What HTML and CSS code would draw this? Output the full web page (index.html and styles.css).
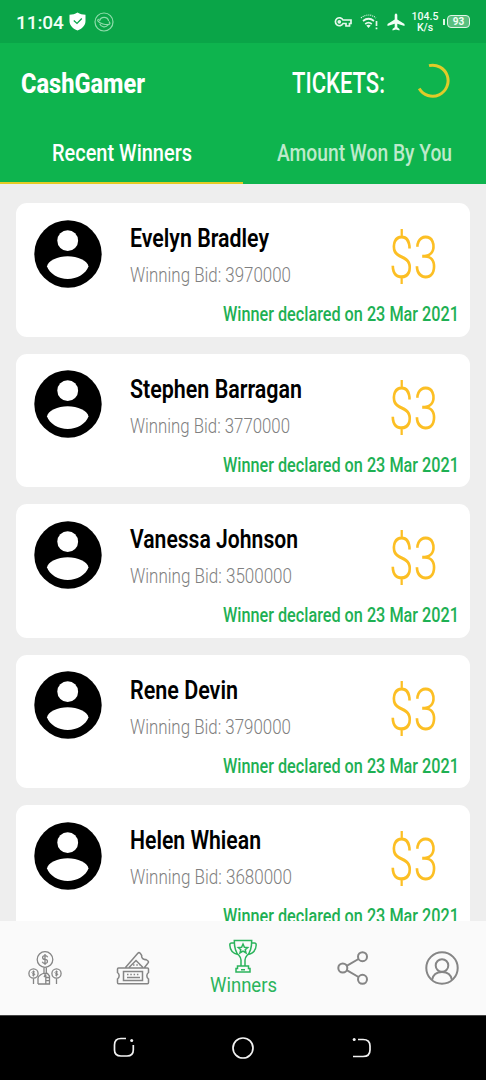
FILE: index.html
```html
<!DOCTYPE html>
<html lang="en">
<head>
<meta charset="utf-8">
<title>CashGamer</title>
<link rel="stylesheet" href="styles.css">
</head>
<body>
<svg class="defs" aria-hidden="true">
  <symbol id="avatar" viewBox="0 0 68 68">
    <circle cx="34" cy="34" r="33.7"/>
    <circle cx="33.7" cy="20.7" r="10.4" fill="#fff"/>
    <path d="M13 46.500C13.500 40.500 24 36.200 33.700 36.200S54 40.500 54.500 46.500C52 53.500 43 59 33.700 59S15.500 53.500 13 46.500Z" fill="#fff"/>
  </symbol>
</svg>
<div class="screen">
  <header class="status">
    <span class="clock">11:04</span>
    <svg class="shield" width="17" height="19" viewBox="0 0 17 19"><path d="M8.5.5C6 2 3.500 2.600.5 2.800V9C.5 13.500 4 16.800 8.500 18.500 13 16.800 16.500 13.500 16.500 9V2.800C13.500 2.600 11 2 8.500.5Z" fill="#fff"/><path d="M4.800 8.500 8 11.400 12.800 6.500" fill="none" stroke="#0aa548" stroke-width="1.300"/></svg>
    <svg class="planet" width="20" height="20" viewBox="0 0 20 20" fill="none" stroke="#8fdcab" stroke-width="1.200"><circle cx="10" cy="10" r="9"/><path d="M5.600 9A4.600 4.600 0 0 1 14.600 9M5.800 12A4.800 4.800 0 0 0 14 13"/><path d="M5.400 7C2 7.500 4 10.500 9 12S18 12.500 14.800 9.500"/></svg>
    <div class="indicators">
      <svg width="18" height="12" viewBox="0 0 18 12" fill="none" stroke="#e6f8ec" stroke-width="1.700"><path d="M9 4H17V7.500H15.500V10H12V7.500H9A4 4 0 1 1 9 4Z"/><circle cx="5.300" cy="5.800" r="1" /></svg>
      <svg class="wifi" width="19" height="16" viewBox="0 0 19 16" fill="none" stroke="#e6f8ec" stroke-width="1.700"><path d="M1 4Q8.500-2 16 4" stroke-dasharray="1 1" stroke-width="1.200"/><path d="M3 7Q8.500 2.500 14 7M5.200 10Q8.500 7.300 11.800 10"/><path d="M6.300 11.500Q8.500 10 10.700 11.500L8.500 14Z" fill="#e6f8ec" stroke="none"/><path d="M16.500 7V12M16.500 13.500V15.200"/></svg>
      <svg class="plane" width="18" height="18" viewBox="0 0 18 18"><path d="M7.700 1.800Q9-.8 10.300 1.800V6.500L17.500 11V13L10.300 10.800V14.300L12.500 16V17.500L9 16.600 5.500 17.500V16L7.700 14.300V10.800L.5 13V11L7.700 6.500Z" fill="#f2fff6"/></svg>
      <span class="speed">104.5<br>K/s</span>
      <span class="battery"><span class="level">93</span></span>
    </div>
  </header>

  <div class="appbar">
    <svg class="label brand" width="124" height="28"><text y="24" textLength="124" lengthAdjust="spacingAndGlyphs">CashGamer</text></svg>
    <svg class="label tickets" width="93" height="28"><text y="24" textLength="93" lengthAdjust="spacingAndGlyphs">TICKETS:</text></svg>
    <svg class="spinner" width="34" height="36" viewBox="0 0 34 36"><path d="M12 2.600A15.500 15.500 0 1 1 2.200 25.500" fill="none" stroke="#dfcb29" stroke-width="3"/></svg>
  </div>

  <nav class="tabs">
    <div class="tab active"><svg class="label" width="140" height="30"><text y="23" textLength="140" lengthAdjust="spacingAndGlyphs">Recent Winners</text></svg></div>
    <div class="tab"><svg class="label" width="175" height="30"><text y="23" textLength="175" lengthAdjust="spacingAndGlyphs">Amount Won By You</text></svg></div>
  </nav>

  <main class="list">
    <article class="card">
      <svg class="avatar"><use href="#avatar"/></svg>
      <div class="info">
        <svg class="label name"><text y="24" textLength="139" lengthAdjust="spacingAndGlyphs">Evelyn Bradley</text></svg>
        <svg class="label bid"><text y="18" textLength="161" lengthAdjust="spacingAndGlyphs">Winning Bid: 3970000</text></svg>
      </div>
      <svg class="label prize"><text y="52" textLength="49" lengthAdjust="spacingAndGlyphs">$3</text></svg>
      <svg class="label date"><text y="18" textLength="236" lengthAdjust="spacingAndGlyphs">Winner declared on 23 Mar 2021</text></svg>
    </article>
    <article class="card">
      <svg class="avatar"><use href="#avatar"/></svg>
      <div class="info">
        <svg class="label name"><text y="24" textLength="172" lengthAdjust="spacingAndGlyphs">Stephen Barragan</text></svg>
        <svg class="label bid"><text y="18" textLength="160" lengthAdjust="spacingAndGlyphs">Winning Bid: 3770000</text></svg>
      </div>
      <svg class="label prize"><text y="52" textLength="49" lengthAdjust="spacingAndGlyphs">$3</text></svg>
      <svg class="label date"><text y="18" textLength="236" lengthAdjust="spacingAndGlyphs">Winner declared on 23 Mar 2021</text></svg>
    </article>
    <article class="card">
      <svg class="avatar"><use href="#avatar"/></svg>
      <div class="info">
        <svg class="label name"><text y="24" textLength="168" lengthAdjust="spacingAndGlyphs">Vanessa Johnson</text></svg>
        <svg class="label bid"><text y="18" textLength="162" lengthAdjust="spacingAndGlyphs">Winning Bid: 3500000</text></svg>
      </div>
      <svg class="label prize"><text y="52" textLength="49" lengthAdjust="spacingAndGlyphs">$3</text></svg>
      <svg class="label date"><text y="18" textLength="236" lengthAdjust="spacingAndGlyphs">Winner declared on 23 Mar 2021</text></svg>
    </article>
    <article class="card">
      <svg class="avatar"><use href="#avatar"/></svg>
      <div class="info">
        <svg class="label name"><text y="24" textLength="108" lengthAdjust="spacingAndGlyphs">Rene Devin</text></svg>
        <svg class="label bid"><text y="18" textLength="161" lengthAdjust="spacingAndGlyphs">Winning Bid: 3790000</text></svg>
      </div>
      <svg class="label prize"><text y="52" textLength="49" lengthAdjust="spacingAndGlyphs">$3</text></svg>
      <svg class="label date"><text y="18" textLength="236" lengthAdjust="spacingAndGlyphs">Winner declared on 23 Mar 2021</text></svg>
    </article>
    <article class="card">
      <svg class="avatar"><use href="#avatar"/></svg>
      <div class="info">
        <svg class="label name"><text y="24" textLength="131" lengthAdjust="spacingAndGlyphs">Helen Whiean</text></svg>
        <svg class="label bid"><text y="18" textLength="162" lengthAdjust="spacingAndGlyphs">Winning Bid: 3680000</text></svg>
      </div>
      <svg class="label prize"><text y="52" textLength="49" lengthAdjust="spacingAndGlyphs">$3</text></svg>
      <svg class="label date"><text y="18" textLength="236" lengthAdjust="spacingAndGlyphs">Winner declared on 23 Mar 2021</text></svg>
    </article>
  </main>

  <nav class="bottom">
    <div class="item">
      <svg width="34" height="34" viewBox="0 0 34 34" fill="none" stroke="#858585" stroke-width="1.300"><circle cx="17" cy="8.500" r="7.800"/><path d="M19.700 6.200Q19 4.600 17 4.600C13.800 4.600 13.800 8.400 17 8.400S20.300 12.500 17 12.500Q15 12.500 14.200 10.800M17 3V14M16 16.500V22M18.300 16.500V22"/><circle cx="5.500" cy="22.500" r="4.600"/><circle cx="28.500" cy="22.500" r="4.600"/><path stroke-width="1" d="M7 21Q4 19.800 4 21.500T7 23Q7 25 4 24M5.500 19.500V25.500M30 21Q27 19.800 27 21.500T30 23Q30 25 27 24M28.500 19.500V25.500"/><path d="M5.500 27.500V33M28.500 27.500V33M10 33V27C10 25.500 15 21.500 16.500 22.500Q18 23.500 16 26M10 33H21.500V25L19.500 22.500H17M17.800 24V33M18 26.500H21.500M18 29.700H21.500"/></svg>
    </div>
    <div class="item">
      <svg width="34" height="34" viewBox="0 0 34 34" fill="none" stroke="#858585" stroke-width="1.500"><path d="M2.500 17H31.500Q32.500 17 32.500 18V21.500A4 4 0 0 0 32.500 28V31.500Q32.500 32.800 31.500 32.800H2.500Q1.500 32.800 1.500 31.500V28A4 4 0 0 0 1.500 21.500V18Q1.500 17 2.500 17ZM7.500 20.500H26.500V29.500H7.500ZM9.500 16.500 21.800 2.200Q23 1 24.200 2.200L25.700 4.500A3.500 3.500 0 0 0 30 8.500L32 10Q33 11 32 12L28.500 16.500M13 16.500 20 9.500 27 16.500"/><path d="M11 23.500H24M17 14H24" stroke-dasharray="1.500 1.800"/><path d="M11 26.500H24"/></svg>
    </div>
    <div class="item current">
      <svg width="28" height="34" viewBox="0 0 28 34" fill="none" stroke="#2bb45c" stroke-width="1.500"><path d="M5.300 1.500H22.700C22.700 11 21 14 18 16.500 16.500 18 16 19 16 21V27H12V21C12 19 11.500 18 10 16.500 7 14 5.300 11 5.300 1.500ZM5.500 4H2.500Q.8 4 .8 6C1 11 4 14.500 9 15.500M22.500 4H25.500Q27.200 4 27.200 6C27 11 24 14.500 19 15.500M8.500 27H19.500V29.500H21V33H7V29.500H8.500ZM12 30.800H16"/><path d="M14 5 15.400 8.200 18.700 8.500 16.200 10.700 17 14 14 12.200 11 14 11.800 10.700 9.300 8.500 12.600 8.200Z"/></svg>
      <svg class="label caption" width="67" height="22"><text y="18" textLength="67" lengthAdjust="spacingAndGlyphs">Winners</text></svg>
    </div>
    <div class="item">
      <svg width="32" height="34" viewBox="0 0 32 34" fill="none" stroke="#858585" stroke-width="2"><circle cx="5.800" cy="17" r="4.500"/><circle cx="25.500" cy="5.700" r="4.500"/><circle cx="25.500" cy="28.300" r="4.500"/><path d="M9.700 14.800 21.500 8M9.700 19.200 21.500 26"/></svg>
    </div>
    <div class="item">
      <svg width="34" height="34" viewBox="0 0 34 34" fill="none" stroke="#858585" stroke-width="2"><circle cx="17" cy="17" r="15.700"/><circle cx="17" cy="14.500" r="6.300"/><path d="M7 29C8 23.500 12 21 17 21S26 23.500 27 29"/></svg>
    </div>
  </nav>

  <footer class="system">
    <svg width="22" height="22" viewBox="0 0 22 22" fill="none" stroke="#f2f2f2" stroke-width="1.700"><path d="M13 1.500H8Q1.500 1.500 1.500 8V13Q1.500 19 8 19H14Q20.300 19 20.300 13V8"/><circle cx="18.700" cy="3.500" r="1.500" fill="#f2f2f2" stroke="none"/></svg>
    <svg width="22" height="22" viewBox="0 0 22 22" fill="none" stroke="#f2f2f2" stroke-width="1.700"><circle cx="11" cy="11" r="10"/></svg>
    <svg width="22" height="22" viewBox="0 0 22 22" fill="none" stroke="#f2f2f2" stroke-width="1.700"><path d="M8 2.500H13Q20 2.500 20 9V13Q20 19.500 13 19.500H3"/><circle cx="4.200" cy="2.500" r="1.500" fill="#f2f2f2" stroke="none"/></svg>
  </footer>
</div>
</body>
</html>
```
FILE: styles.css
```css
* { box-sizing: border-box; }
body { margin: 0; font-family: Roboto, sans-serif; }
.defs { position: absolute; width: 0; height: 0; }
svg { display: block; flex: none; }
.label { overflow: visible; }

.screen { width: 486px; height: 1080px; display: flex; flex-direction: column; overflow: hidden; background: #eee; }

.status { height: 43px; flex: none; display: flex; align-items: center; padding: 0 16px; background: #0aa548; color: #f2fff6; }
.clock { width: 53px; padding-top: 1px; font-size: 19px; font-weight: 500; letter-spacing: -0.1px; }
.planet { margin-left: 8px; }
.indicators { margin-left: auto; display: flex; align-items: center; }
.wifi { margin-left: 8px; }
.plane { margin-left: 8px; }
.speed { width: 28px; margin-left: 6px; font-size: 10.5px; line-height: 11px; font-weight: 500; text-align: center; }
.battery { display: flex; align-items: center; margin-left: 4px; }
.battery::before { content: ""; width: 2px; height: 6px; margin-right: 2px; background: #dff5e6; }
.level { width: 23px; height: 13px; border: 1.5px solid #dff5e6; border-radius: 4px; background: #58bf7f; font-size: 10px; line-height: 11px; font-weight: 700; text-align: center; }

.appbar { height: 80px; flex: none; display: flex; align-items: flex-start; padding: 25.500px 35px 0 21px; background: #0eb44e; fill: #fff; }
.brand { font-size: 28px; font-weight: 800; }
.tickets { margin-left: 147px; font-size: 29px; font-weight: 500; }
.spinner { margin: -6px 0 0 auto; }

.tabs { height: 60.500px; flex: none; display: flex; background: #0eb44e; }
.tab { width: 50%; display: flex; justify-content: center; padding-top: 15px; border-bottom: 2.500px solid transparent; font-size: 24.500px; font-weight: 500; fill: #bdeacb; }
.active { border-bottom-color: #e5cb24; fill: #fff; }

.list { flex: 1; min-height: 0; overflow: hidden; padding: 19.500px 16px 0; }
.card { height: 133.500px; margin-bottom: 17px; padding: 16.500px 11px 0 17.500px; display: grid; grid-template-columns: 96px 1fr 70px; grid-template-rows: 83.500px 1fr; background: #fff; border-radius: 11px; }
.avatar { width: 68px; height: 68px; }
.info { min-width: 0; padding-top: 3.500px; display: flex; flex-direction: column; gap: 17px; }
.name { width: 100%; height: 24px; font-size: 26px; font-weight: 600; }
.bid { width: 100%; height: 20px; font-size: 20.500px; font-weight: 350; fill: #808080; }
.prize { width: 49px; height: 60px; margin-top: 6.500px; font-size: 60px; font-weight: 300; fill: #fcbf24; }
.date { grid-column: 1 / -1; justify-self: end; width: 236px; height: 20px; font-size: 20.500px; font-weight: 500; fill: #1eb053; }

.bottom { height: 94.500px; flex: none; display: flex; background: #fafafa; padding-top: 30px; }
.item { width: 88.500px; display: flex; flex-direction: column; align-items: center; }
.item.current { width: 132px; margin-top: -11.500px; }
.item:nth-child(-n+2) { padding-left: 1px; }
.caption { margin-top: 1px; font-size: 20px; fill: #2bb45c; }

.system { height: 65px; flex: none; display: flex; justify-content: space-between; padding: 21px 114px 0 113px; background: #000; border-top: 1px solid #444; }
```
